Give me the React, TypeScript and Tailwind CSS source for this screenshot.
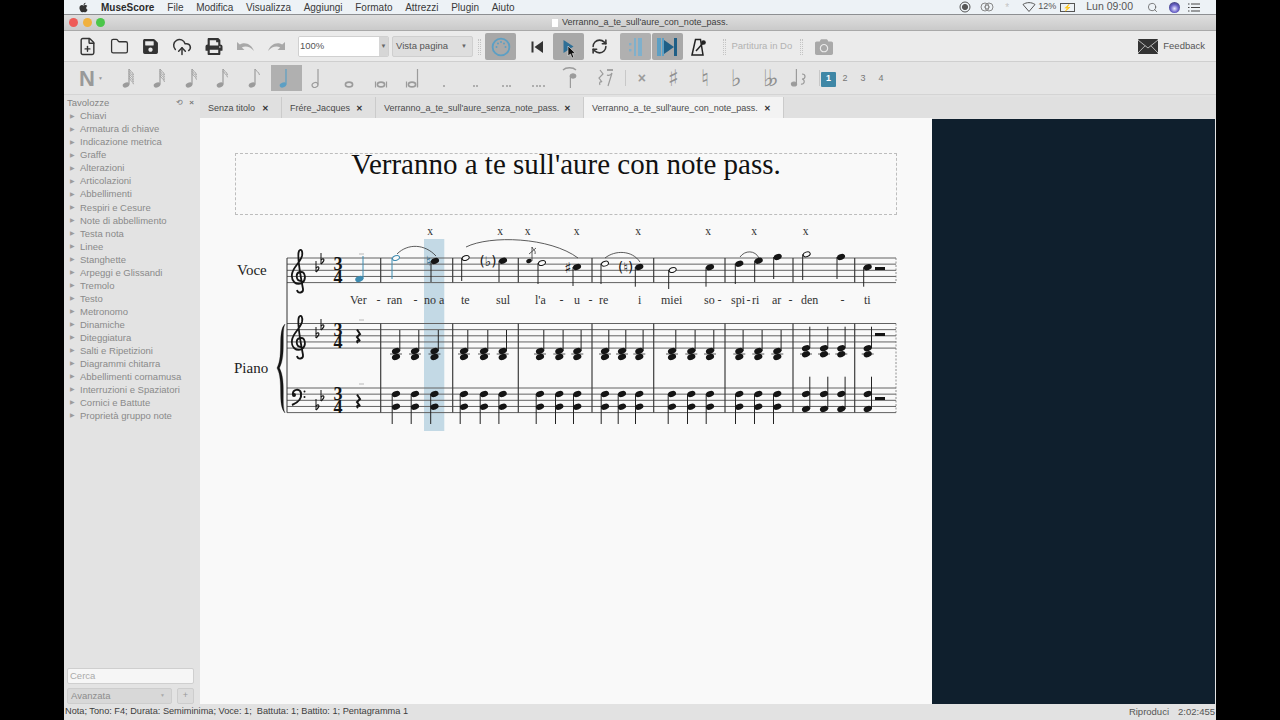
import { CloudUpload, FilePlus, Folder, RefreshCw, Search } from "lucide-react";
import { FaApple, FaCamera, FaPrint, FaSave } from "react-icons/fa";
import type { ReactNode } from "react";

const MENU = ["File", "Modifica", "Visualizza", "Aggiungi", "Formato", "Attrezzi", "Plugin", "Aiuto"];

const PALETTES = [
  "Chiavi", "Armatura di chiave", "Indicazione metrica", "Graffe", "Alterazioni", "Articolazioni",
  "Abbellimenti", "Respiri e Cesure", "Note di abbellimento", "Testa nota", "Linee", "Stanghette",
  "Arpeggi e Glissandi", "Tremolo", "Testo", "Metronomo", "Dinamiche", "Diteggiatura",
  "Salti e Ripetizioni", "Diagrammi chitarra", "Abbellimenti cornamusa", "Interruzioni e Spaziatori",
  "Cornici e Battute", "Proprietà gruppo note",
];

const TABS = [
  { label: "Senza titolo", width: "w-[82px]" },
  { label: "Frére_Jacques", width: "w-[94px]" },
  { label: "Verranno_a_te_sull'aure_senza_note_pass.", width: "w-[208px]" },
  { label: "Verranno_a_te_sull'aure_con_note_pass.", width: "w-[200px]", active: true },
];

// ─── Toolbar bits ────────────────────────────────────────────────────────────

function Slot({ children }: { children: ReactNode }) {
  return <div className="flex h-full w-[31.5px] shrink-0 items-center justify-center">{children}</div>;
}

function Grip() {
  return <div className="h-[16px] w-[3px] shrink-0 border-x border-dotted border-[#c4c4c4]" />;
}

function NoteIcon({ flags = 0, hollow = false, color = "#9b9b9b" }: { flags?: number; hollow?: boolean; color?: string }) {
  return (
    <svg width="18" height="24" viewBox="0 0 18 24">
      <ellipse
        cx="6"
        cy="19"
        rx={hollow ? 3 : 3.4}
        ry="2.4"
        transform="rotate(-20 6 19)"
        fill={hollow ? "none" : color}
        stroke={color}
        strokeWidth={hollow ? 1.2 : 0}
      />
      <line x1="9" y1="18.5" x2="9" y2="3" stroke={color} strokeWidth="1.2" />
      {Array.from({ length: flags }).map((_, i) => (
        <path
          key={i}
          d={`M9 ${3 + i * 2.3} C10 ${5 + i * 2.3} 13 ${6 + i * 2.3} 13.5 ${9 + i * 2.3}`}
          fill="none"
          stroke={color}
          strokeWidth="0.9"
        />
      ))}
    </svg>
  );
}

function WholeIcon({ kind }: { kind: "whole" | "breve" | "long" }) {
  return (
    <svg width="18" height="24" viewBox="0 0 18 24" stroke="#9b9b9b" fill="none">
      <ellipse cx="9" cy="18.5" rx="3.6" ry="2.4" strokeWidth="1.6" />
      {kind !== "whole" && (
        <>
          <line x1="3.5" y1="15.5" x2="3.5" y2="21.5" strokeWidth="1.2" />
          <line x1="14.5" y1="15.5" x2="14.5" y2="21.5" strokeWidth="1.2" />
        </>
      )}
      {kind === "long" && <line x1="14.5" y1="3" x2="14.5" y2="21" strokeWidth="1.2" />}
    </svg>
  );
}

function Dots({ n }: { n: number }) {
  return (
    <div className="flex h-[24px] items-end gap-[1.5px] pb-[3px]">
      {Array.from({ length: n }).map((_, i) => (
        <span key={i} className="h-[2px] w-[2px] rounded-full bg-[#9b9b9b]" />
      ))}
    </div>
  );
}

function Accidental({ children }: { children: ReactNode }) {
  return <span className="font-['DejaVu_Sans',sans-serif] text-[23px] leading-none text-[#909090]">{children}</span>;
}

function UndoArrow({ flip = false }: { flip?: boolean }) {
  return (
    <svg width="19" height="11" viewBox="0 0 19 11" fill="#a8a8a8" className={flip ? "-scale-x-100" : ""}>
      <path d="M1 1 L1 9 L8.5 9 L5.8 6.4 C9.5 4.4 14 5.4 18 10 C16 3.5 9 0 3.8 3.6 Z" />
    </svg>
  );
}

// ─── Score drawing ───────────────────────────────────────────────────────────

const INK = "#151515";

function Staff({ top }: { top: number }) {
  return (
    <g stroke="#626262" strokeWidth="1">
      {[0, 1, 2, 3, 4].map((i) => (
        <line key={i} x1="287" x2="896" y1={top + i * 6.15} y2={top + i * 6.15} />
      ))}
    </g>
  );
}

function Head({ x, y, hollow = false, color = INK }: { x: number; y: number; hollow?: boolean; color?: string }) {
  return (
    <ellipse
      cx={x}
      cy={y}
      rx={hollow ? 3.6 : 4.2}
      ry={hollow ? 2.3 : 2.9}
      transform={`rotate(-20 ${x} ${y})`}
      fill={hollow ? "#f9f9f9" : color}
      stroke={color}
      strokeWidth={hollow ? 1 : 0}
    />
  );
}

function VoiceNote({ x, y, end, hollow = false, color = INK }: { x: number; y: number; end: number; hollow?: boolean; color?: string }) {
  return (
    <g>
      <line x1={x - 4} x2={x - 4} y1={y} y2={end} stroke={color === INK ? "#222" : color} strokeWidth="1" />
      <Head x={x} y={y} hollow={hollow} color={color} />
    </g>
  );
}

function TrebleClef({ x, y }: { x: number; y: number }) {
  return (
    <path
      transform={`translate(${x} ${y})`}
      d="M1 5 C-4 5 -5 -3 0 -4 C5 -5 7 3 2 7 C-4 10 -9 5 -8 -2 C-7 -9 0 -13 2 -20 C3 -25 1 -28 -1 -25 C-3 -21 -1 -10 1 2 L3 13 C3.5 17 -2 18 -3 14"
      fill="none"
      stroke={INK}
      strokeWidth="1.8"
    />
  );
}

function BassClef({ x, y }: { x: number; y: number }) {
  return (
    <g transform={`translate(${x} ${y})`}>
      <path d="M-5 1 C-6 -5 2 -6 3 -1 C4 5 -1 9 -6 11" fill="none" stroke={INK} strokeWidth="2" />
      <circle cx="-4" cy="1" r="2" fill={INK} />
      <circle cx="6.5" cy="-2.5" r="1" fill={INK} />
      <circle cx="6.5" cy="3" r="1" fill={INK} />
    </g>
  );
}

// y is where the bowl of the flat comes to its point
function Flat({ x, y }: { x: number; y: number }) {
  return (
    <g fill="none" stroke={INK}>
      <line x1={x} x2={x} y1={y - 11} y2={y} strokeWidth="1" />
      <path d={`M${x} ${y - 4} C${x + 2.5} ${y - 6.5} ${x + 5} ${y - 4.5} ${x} ${y}`} strokeWidth="1.2" />
    </g>
  );
}

function Signature({ top, flatA, flatB }: { top: number; flatA: number; flatB: number }) {
  return (
    <g>
      <Flat x={316} y={flatA} />
      <Flat x={321} y={flatB} />
      <g fontFamily="'Liberation Serif', serif" fontSize="18" fontWeight="700" fill={INK} textAnchor="middle">
        <text x="338" y={top + 12.4}>3</text>
        <text x="338" y={top + 24.7}>4</text>
      </g>
    </g>
  );
}

function QuarterRest({ x, y }: { x: number; y: number }) {
  return (
    <path
      transform={`translate(${x} ${y})`}
      d="M-1 -6.5 L2 -2 L-1 1 L2 5 C0 4 -2 5 0 7"
      fill="none"
      stroke={INK}
      strokeWidth="2"
    />
  );
}

const CHORDS = [396, 415, 434.5, 464, 484, 502.7, 540, 559.3, 577.3, 605, 622, 639.3, 672, 691.3, 710, 739.3, 758.3, 777.3];
const HIGH_CHORDS = [806, 824, 841.3, 867.7];
const BARS = [380.7, 452.7, 518.3, 592, 653.7, 725, 793, 854.7];
const MARKS = [430, 500, 527.5, 576.5, 638, 708, 754, 805.5];
const LYRICS: [string, number][] = [
  ["Ver", 350], ["-", 376.5], ["ran", 387], ["-", 413.5], ["no a", 424], ["te", 461], ["sul", 496], ["l'a", 535],
  ["-", 559.5], ["u", 574], ["-", 588.5], ["re", 599], ["i", 638], ["miei", 661], ["so", 704], ["-", 717.5],
  ["spi", 731], ["-", 746.5], ["ri", 752], ["ar", 772], ["-", 788.5], ["den", 801], ["-", 840.5], ["ti", 864],
];

function ScoreSystem() {
  return (
    <svg width="680" height="215" viewBox="225 220 680 215" className="-ml-[10px] mt-[5px] block">
      <rect x="424" y="239" width="20.3" height="192" fill="#c3d9e5" />

      {MARKS.map((x) => (
        <text key={x} x={x} y="235" fontSize="11.5" textAnchor="middle" fontFamily="'Liberation Serif', serif" fill="#333">x</text>
      ))}

      <Staff top={258} />
      <Staff top={323.5} />
      <Staff top={388} />

      <line x1="287" x2="287" y1="258" y2="412.6" stroke="#333" strokeWidth="1" />
      <g stroke="#3c3c3c" strokeWidth="1.2">
        {BARS.map((x) => (
          <g key={x}>
            <line x1={x} x2={x} y1="258" y2="282.6" />
            <line x1={x} x2={x} y1="323.5" y2="412.6" />
          </g>
        ))}
      </g>
      <g stroke="#777" strokeWidth="0.8" strokeDasharray="2 1.5">
        <line x1="896" x2="896" y1="258" y2="282.6" />
        <line x1="896" x2="896" y1="323.5" y2="412.6" />
      </g>

      <path d="M285 324 C277 331 284 355 277 368 C284 381 277 405 285 413 C281 404 286.5 381 279.5 368 C286.5 355 281 332 285 324 Z" fill={INK} stroke={INK} strokeWidth="0.3" />

      <TrebleClef x={300} y={276} />
      <TrebleClef x={300} y={342} />
      <BassClef x={298} y={394} />
      <Signature top={258} flatA={272} flatB={264} />
      <Signature top={323.5} flatA={338} flatB={330} />
      <Signature top={388} flatA={410} flatB={401} />

      <g fontFamily="'Liberation Serif', serif" fontSize="15" fill="#222">
        <text x="237" y="274.5">Voce</text>
        <text x="234" y="372.5">Piano</text>
      </g>

      {/* Voice line */}
      <line x1="363" x2="363" y1="279" y2="256" stroke="#3d8bb0" strokeWidth="1" />
      <Head x={359.3} y={279} color="#3d8bb0" />
      <line x1="359" x2="364" y1="254" y2="254" stroke="#aaa" strokeWidth="0.8" />
      <VoiceNote x={396} y={258} end={279} hollow color="#3d8bb0" />
      <VoiceNote x={435} y={261} end={282} />
      <text x="428.5" y="266" fontSize="14" textAnchor="middle" fontFamily="'DejaVu Sans', sans-serif" fill="#1e5d7c">♮</text>
      <VoiceNote x={465.7} y={258} end={281} hollow />
      <text x="488" y="265.5" fontSize="13.5" textAnchor="middle" fontFamily="'DejaVu Sans', sans-serif" fill={INK}>(♭)</text>
      <VoiceNote x={503} y={260.7} end={282} />
      <line x1="532" x2="532" y1="261" y2="247" stroke="#333" strokeWidth="0.8" />
      <path d="M532 247 C533 250 536 250 535 254 M529 254 L536 248" fill="none" stroke="#333" strokeWidth="0.8" />
      <ellipse cx="529" cy="261" rx="2.8" ry="2" transform="rotate(-20 529 261)" fill={INK} />
      <VoiceNote x={542} y={263} end={284} hollow />
      <text x="568" y="272.5" fontSize="15" textAnchor="middle" fontFamily="'DejaVu Sans', sans-serif" fill={INK}>♯</text>
      <VoiceNote x={577} y={267} end={286} />
      <VoiceNote x={605} y={263.7} end={284} hollow />
      <text x="625.7" y="271.5" fontSize="13.5" textAnchor="middle" fontFamily="'DejaVu Sans', sans-serif" fill={INK}>(♮)</text>
      <VoiceNote x={639.3} y={267} end={286.7} />
      <VoiceNote x={672.7} y={270} end={289} hollow />
      <VoiceNote x={710} y={267.3} end={286.7} />
      <VoiceNote x={739.3} y={263.7} end={284} />
      <VoiceNote x={758.7} y={260.7} end={282} />
      <VoiceNote x={777.7} y={257} end={279} />
      <VoiceNote x={806.7} y={254.3} end={280} hollow />
      <VoiceNote x={841} y={257} end={279} />
      <VoiceNote x={867.7} y={267.3} end={286.7} />
      <rect x="875" y="267" width="10" height="3" fill={INK} />

      <g fill="none" stroke="#333" strokeWidth="0.8">
        <path d="M397 254 C408 243 425 244 436 256" />
        <path d="M466 247 C490 235 550 237 578 258" />
        <path d="M605 258 C615 250 632 250 640 262" />
        <path d="M740 257 C745 250 755 250 759 258" />
      </g>

      <g fontFamily="'Liberation Serif', serif" fontSize="12" fill="#333">
        {LYRICS.map(([word, x], i) => (
          <text key={i} x={x} y="304">{word}</text>
        ))}
      </g>

      {/* Piano, treble */}
      <QuarterRest x={358} y={336} />
      <line x1="359" x2="364" y1="320" y2="320" stroke="#aaa" strokeWidth="0.8" />
      {CHORDS.map((x) => (
        <g key={x}>
          <line x1={x + 3.8} x2={x + 3.8} y1="351" y2="330" stroke="#222" strokeWidth="1" />
          <line x1={x - 6} x2={x + 6} y1="354" y2="354" stroke="#333" strokeWidth="0.8" />
          <Head x={x} y={351} />
          <Head x={x} y={357} />
        </g>
      ))}
      {HIGH_CHORDS.map((x) => (
        <g key={x}>
          <line x1={x + 3.8} x2={x + 3.8} y1="348" y2="326.7" stroke="#222" strokeWidth="1" />
          <line x1={x - 6} x2={x + 6} y1="354" y2="354" stroke="#333" strokeWidth="0.8" />
          <Head x={x} y={348.3} />
          <Head x={x} y={354.3} />
        </g>
      ))}
      <rect x="875" y="333" width="10" height="3" fill={INK} />

      {/* Piano, bass */}
      <QuarterRest x={358} y={401} />
      <line x1="359" x2="364" y1="384" y2="384" stroke="#aaa" strokeWidth="0.8" />
      {CHORDS.map((x) => (
        <g key={x}>
          <line x1={x - 3.8} x2={x - 3.8} y1="394" y2="424" stroke="#222" strokeWidth="1" />
          <Head x={x} y={394} />
          <Head x={x} y={406.7} />
        </g>
      ))}
      {HIGH_CHORDS.map((x) => (
        <g key={x}>
          <line x1={x + 3.8} x2={x + 3.8} y1="409" y2="376.7" stroke="#222" strokeWidth="1" />
          <Head x={x} y={394} />
          <Head x={x} y={409} />
        </g>
      ))}
      <rect x="875" y="397" width="10" height="3" fill={INK} />
    </svg>
  );
}

// ─── Main ────────────────────────────────────────────────────────────────────

export default function App() {
  return (
    <div className="flex h-[720px] w-[1280px] justify-center overflow-hidden bg-black font-['Liberation_Sans',Arial,sans-serif]">
      <div className="flex w-[1152px] flex-col bg-[#e2e2e2]">
        {/* macOS menu bar */}
        <div className="flex h-[15px] shrink-0 items-center border-b border-[#8d8f92] bg-[#edf2f6] text-[10px] text-[#3a3a3a]">
          <FaApple className="ml-[14px] h-[11px] w-[11px] text-[#333]" />
          <span className="ml-[12px] text-[10px] font-bold text-[#2b2b2b]">MuseScore</span>
          <div className="ml-[13px] flex gap-[12.7px]">
            {MENU.map((item) => (
              <span key={item}>{item}</span>
            ))}
          </div>
          <div className="ml-auto flex items-center pr-[16px] text-[#555]">
            <svg width="12" height="12" viewBox="0 0 12 12" fill="none" stroke="#555"><circle cx="6" cy="6" r="5" /><circle cx="6" cy="6" r="2.6" fill="#555" /></svg>
            <svg className="ml-[9px]" width="14" height="12" viewBox="0 0 14 12" fill="none" stroke="#888"><circle cx="5" cy="6" r="4" /><circle cx="9" cy="6" r="4" /><circle cx="7" cy="6" r="2" /></svg>
            <span className="ml-[11px] text-[10px] text-[#c4c4c4]">*</span>
            <svg className="ml-[13px]" width="14" height="10" viewBox="0 0 14 10" fill="none" stroke="#555"><path d="M1 2.5 C4.5 0 9.5 0 13 2.5 L7 9.5 Z" /></svg>
            <span className="ml-[2px] text-[9px]">12%</span>
            <span className="ml-[4px] flex h-[9px] w-[15px] items-center justify-center border border-[#555] text-[7px] leading-none">⚡</span>
            <span className="ml-[11px] text-[10.5px]">Lun 09:00</span>
            <Search className="ml-[14px] h-[11px] w-[11px]" strokeWidth={1.6} />
            <span className="ml-[11px] h-[11px] w-[11px] rounded-full bg-[radial-gradient(circle_at_50%_60%,#e8e8ff,#6a62c8_45%,#20264a)]" />
            <svg className="ml-[8px]" width="12" height="9" viewBox="0 0 12 9" stroke="#444"><path d="M3 1h9M3 4.5h9M3 8h9M0 1h1.5M0 4.5h1.5M0 8h1.5" /></svg>
          </div>
        </div>

        {/* Window title */}
        <div className="relative flex h-[16px] shrink-0 items-center justify-center border-b border-[#a9a9a9] bg-gradient-to-b from-[#dedede] to-[#cacaca] text-[9px] text-[#3c3c3c]">
          <span className="mr-[4px] h-[8px] w-[6px] bg-white" />
          Verranno_a_te_sull'aure_con_note_pass.
          <div className="absolute left-[5px] top-[3px] flex gap-[4.5px]">
            <span className="h-[9px] w-[9px] rounded-full bg-[#ee5b57]" />
            <span className="h-[9px] w-[9px] rounded-full bg-[#f0b13e]" />
            <span className="h-[9px] w-[9px] rounded-full bg-[#4bc64a]" />
          </div>
        </div>

        {/* Main toolbar */}
        <div className="flex h-[31px] shrink-0 items-center border-b border-[#cfcfcf] bg-[#ebebeb] pl-[8px] pt-px text-[#333]">
          <Slot><FilePlus className="h-[19px] w-[19px]" strokeWidth={1.8} /></Slot>
          <Slot><Folder className="h-[19px] w-[19px]" strokeWidth={1.6} /></Slot>
          <Slot><FaSave className="h-[17px] w-[17px]" /></Slot>
          <Slot><CloudUpload className="h-[20px] w-[20px]" strokeWidth={1.8} /></Slot>
          <Slot><FaPrint className="h-[17px] w-[18px]" /></Slot>
          <Slot><UndoArrow /></Slot>
          <Slot><UndoArrow flip /></Slot>
          <div className="ml-[5.5px] flex h-[21px] w-[91px] shrink-0 overflow-hidden rounded-[2px] border border-[#d0d0d0] text-[9.5px] text-[#555]">
            <span className="flex w-[80px] items-center bg-white pl-[1px]">100%</span>
            <span className="flex flex-1 items-center justify-center bg-[#d6d6d6] text-[6px] text-[#666]">▼</span>
          </div>
          <div className="ml-[3px] flex h-[21px] w-[81px] shrink-0 items-center justify-between rounded-[2px] border border-[#cfcfcf] bg-[#dedede] px-[3px] pr-[5px] text-[9.5px] text-[#555]">
            Vista pagina
            <span className="text-[6px] text-[#666]">▼</span>
          </div>
          <div className="ml-[5px]"><Grip /></div>
          <div className="ml-[4px] flex h-[27px] w-[31px] shrink-0 items-center justify-center rounded-[2px] bg-[#a8a8a8]">
            <svg width="20" height="20" viewBox="0 0 20 20" fill="none" stroke="#5c9fc4" strokeWidth="1.8">
              <circle cx="10" cy="10" r="8.4" />
              <g fill="#5c9fc4" stroke="none">
                <circle cx="5.5" cy="10" r="1" /><circle cx="14.5" cy="10" r="1" /><circle cx="7" cy="6.5" r="1" /><circle cx="13" cy="6.5" r="1" /><circle cx="10" cy="5" r="1" />
              </g>
            </svg>
          </div>
          <div className="ml-[5px] flex h-full w-[31.5px] shrink-0 items-center justify-center">
            <svg width="12" height="12" viewBox="0 0 12 12" fill="#333"><rect x="0.5" y="0.5" width="2" height="11" /><path d="M12 0 V12 L3.5 6 Z" /></svg>
          </div>
          <div className="relative flex h-[27px] w-[31px] shrink-0 items-center justify-center rounded-[2px] bg-[#a8a8a8]">
            <svg width="11" height="13" viewBox="0 0 11 13" fill="#2f6f96"><path d="M0.5 0 L10.5 6.5 L0.5 13 Z" /></svg>
            <svg className="absolute left-[14px] top-[12px]" width="9" height="14" viewBox="0 0 9 14"><path d="M1 1 V11 L3.5 9 L5 13 L6.8 12.2 L5.3 8.4 L8.3 8.2 Z" fill="#111" stroke="#eee" strokeWidth="0.6" /></svg>
          </div>
          <div className="flex h-full w-[31.5px] shrink-0 items-center justify-center">
            <RefreshCw className="h-[17px] w-[17px]" strokeWidth={2.2} />
          </div>
          <div className="ml-[5px] flex h-[27px] w-[31px] shrink-0 items-center justify-center rounded-[2px] bg-[#b0b0b0]">
            <svg width="14" height="18" viewBox="0 0 14 18" fill="#7fb0cc"><rect x="0" y="5" width="2.4" height="2.4" /><rect x="0" y="11" width="2.4" height="2.4" /><rect x="5" y="0" width="2" height="18" /><rect x="9" y="0" width="4" height="18" /></svg>
          </div>
          <div className="ml-[1px] flex h-[27px] w-[31px] shrink-0 items-center justify-center rounded-[2px] bg-[#a8a8a8]">
            <svg width="22" height="18" viewBox="0 0 22 18"><rect x="0" y="0" width="4" height="18" fill="#5c9fc4" /><rect x="5" y="0" width="2" height="18" fill="#5c9fc4" /><path d="M7 2 L17 9 L7 16 Z" fill="#1f5f86" /><rect x="17" y="0" width="3" height="18" fill="#1f5f86" /></svg>
          </div>
          <div className="flex h-full w-[31.5px] shrink-0 items-center justify-center">
            <svg width="15" height="18" viewBox="0 0 15 18" fill="none" stroke="#222" strokeWidth="1.5"><path d="M1 17 L4.5 1.5 H9.5 L12 17 Z" /><path d="M5 13 L13 4" /><circle cx="12.5" cy="4.5" r="1.6" fill="#222" /></svg>
          </div>
          <div className="ml-[8px]"><Grip /></div>
          <span className="ml-[6px] w-[68px] shrink-0 text-[9.5px] text-[#b2b2b2]">Partitura in Do</span>
          <Grip />
          <FaCamera className="ml-[11px] h-[18px] w-[20px] text-[#a9a9a9]" />
          <div className="ml-auto flex items-center pr-[11px]">
            <svg width="20" height="15" viewBox="0 0 20 15"><rect width="20" height="15" rx="1" fill="#333" /><path d="M0 1 L10 9 L20 1 M0 14 L7 6.8 M20 14 L13 6.8" fill="none" stroke="#d8d8d8" strokeWidth="0.8" /></svg>
            <span className="ml-[5px] text-[9.5px] text-[#555]">Feedback</span>
          </div>
        </div>

        {/* Note input toolbar */}
        <div className="flex h-[33px] shrink-0 items-center border-b border-[#d4d4d4] bg-[#e5e5e5]">
          <div className="ml-[15px] flex h-full w-[34px] shrink-0 items-center pt-[2px] text-[#999]">
            <span className="text-[22px] font-bold leading-none">N</span>
            <span className="ml-[3px] text-[5px]">▼</span>
          </div>
          <Slot><NoteIcon flags={5} /></Slot>
          <Slot><NoteIcon flags={4} /></Slot>
          <Slot><NoteIcon flags={3} /></Slot>
          <Slot><NoteIcon flags={2} /></Slot>
          <Slot><NoteIcon flags={1} /></Slot>
          <div className="flex h-[26px] w-[31.5px] shrink-0 items-center justify-center bg-[#b0b0b0]"><NoteIcon color="#5c9fc4" /></div>
          <Slot><NoteIcon hollow /></Slot>
          <Slot><WholeIcon kind="whole" /></Slot>
          <Slot><WholeIcon kind="breve" /></Slot>
          <Slot><WholeIcon kind="long" /></Slot>
          <Slot><Dots n={1} /></Slot>
          <Slot><Dots n={2} /></Slot>
          <Slot><Dots n={3} /></Slot>
          <Slot><Dots n={4} /></Slot>
          <Slot>
            <svg width="18" height="24" viewBox="0 0 18 24" fill="none" stroke="#9b9b9b">
              <path d="M2 4 C5 1 12 1 15 4" strokeWidth="1.4" />
              <ellipse cx="12" cy="10" rx="3" ry="2.2" fill="#9b9b9b" />
              <line x1="9.4" x2="9.4" y1="10" y2="22" strokeWidth="1.2" />
            </svg>
          </Slot>
          <div className="ml-[4px]">
            <Slot>
              <svg width="18" height="22" viewBox="0 0 18 22" fill="none" stroke="#9b9b9b" strokeWidth="1.2">
                <path d="M4 3 L7 7 L3 11 L6 15 C4 14 3 16 4 18" />
                <path d="M11 3h6" strokeWidth="1.8" />
                <path d="M11 8 C13 9 15 8 16 6 L12 19" />
              </svg>
            </Slot>
          </div>
          <div className="ml-[4px] h-[16px] w-px shrink-0 bg-[#c8c8c8]" />
          <div className="flex h-full items-center">
            <Slot><span className="text-[14px] font-bold leading-none text-[#9b9b9b]">×</span></Slot>
            <Slot><Accidental>♯</Accidental></Slot>
            <Slot><Accidental>♮</Accidental></Slot>
            <Slot><Accidental>♭</Accidental></Slot>
            <Slot><span className="font-['DejaVu_Sans',sans-serif] text-[23px] leading-none tracking-[-6px] text-[#909090]">♭♭</span></Slot>
            <Slot>
              <svg width="18" height="20" viewBox="0 0 18 20" fill="none" stroke="#9b9b9b" strokeWidth="1.2">
                <ellipse cx="4" cy="16" rx="2.6" ry="2" fill="#9b9b9b" />
                <line x1="6.4" x2="6.4" y1="16" y2="1" />
                <path d="M12 6 C16 6 16 11 12 11 M12 11 C16 12 14 17 11 16" />
              </svg>
            </Slot>
          </div>
          <div className="ml-[4px] h-[16px] w-px shrink-0 bg-[#c8c8c8]" />
          <div className="flex items-center pt-[2px]">
            <span className="ml-[1px] flex h-[15px] w-[15px] shrink-0 items-center justify-center rounded-[1px] bg-[#3f87a6] text-[9px] font-bold text-white">1</span>
            <div className="flex text-[9px] text-[#777]">
              <span className="w-[18px] text-center">2</span>
              <span className="w-[18px] text-center">3</span>
              <span className="w-[18px] text-center">4</span>
            </div>
          </div>
        </div>

        {/* Body */}
        <div className="flex min-h-0 flex-1">
          {/* Palette */}
          <aside className="flex w-[136px] shrink-0 flex-col bg-[#e3e3e3] pr-[1px]">
            <div className="flex h-[15px] items-center justify-between pl-[3px] pr-[5px] pt-[1px] text-[9.5px] text-[#858585]">
              Tavolozze
              <span className="flex items-center gap-[6px] text-[8px] leading-none text-[#777]">
                <span className="text-[8px]">⟲</span>
                <span className="font-bold">×</span>
              </span>
            </div>
            <ul className="flex flex-col">
              {PALETTES.map((name) => (
                <li key={name} className="flex h-[13.03px] items-center text-[9.5px] text-[#8a8a8a]">
                  <span className="ml-[6px] w-[10px] text-[6px] text-[#9c9c9c]">▶</span>
                  {name}
                </li>
              ))}
            </ul>
            <div className="mt-auto flex flex-col pl-[3px] pr-[5px]">
              <div className="flex h-[16px] items-center rounded-[2px] border border-[#cfcfcf] bg-[#f6f6f6] pl-[2px] text-[9.5px] text-[#aaa]">Cerca</div>
              <div className="mt-[4px] flex h-[16px] items-center gap-[5px]">
                <div className="flex h-full w-[105px] items-center justify-between rounded-[2px] border border-[#cdcdcd] bg-[#d8d8d8] pl-[3px] pr-[6px] text-[9.5px] text-[#8d8d8d]">
                  Avanzata
                  <span className="text-[5px] text-[#aaa]">▼</span>
                </div>
                <div className="flex h-full flex-1 items-center justify-center rounded-[2px] border border-[#cdcdcd] bg-[#dcdcdc] text-[9px] text-[#999]">+</div>
              </div>
            </div>
          </aside>

          {/* Tabs and score */}
          <div className="flex min-w-0 flex-1 flex-col">
            <div className="mt-[2px] flex h-[21px] shrink-0 bg-[#e0e0e0]">
              {TABS.map((tab) => (
                <div
                  key={tab.label}
                  className={`flex ${tab.width} shrink-0 items-center justify-between border-r border-[#cbcbcb] pl-[8px] pr-[12px] pt-[2px] text-[9px] text-[#4a4a4a] ${tab.active ? "bg-[#f3f3f3]" : "bg-[#e0e0e0]"}`}
                >
                  <span className="whitespace-nowrap">{tab.label}</span>
                  <span className="text-[8px] font-bold leading-none text-[#333]">✕</span>
                </div>
              ))}
            </div>
            <div className="flex min-h-0 flex-1">
              <div className="w-[732px] shrink-0 bg-[#f9f9f9] pl-[35px] pt-[35px]">
                <div className="flex h-[62px] w-[662px] justify-center border border-dashed border-[#bdbdbd] font-['Liberation_Serif',serif] text-[29px] leading-[21px] text-[#111]">
                  Verranno a te sull'aure con note pass.
                </div>
                <ScoreSystem />
              </div>
              <div className="mr-px mt-px flex-1 bg-[#0f1f2d]" />
            </div>
          </div>
        </div>

        {/* Status bar */}
        <div className="flex h-[16px] shrink-0 items-center justify-between bg-[#e2e2e2] pl-[1px] pr-[1px] text-[9.2px] text-[#3d3d3d]">
          <span className="whitespace-pre">Nota; Tono: F4; Durata: Semiminima; Voce: 1;  Battuta: 1; Battito: 1; Pentagramma 1</span>
          <span className="flex gap-[9px] text-[9.5px] text-[#555]">
            <span>Riproduci</span>
            <span>2:02:455</span>
          </span>
        </div>
      </div>
    </div>
  );
}
